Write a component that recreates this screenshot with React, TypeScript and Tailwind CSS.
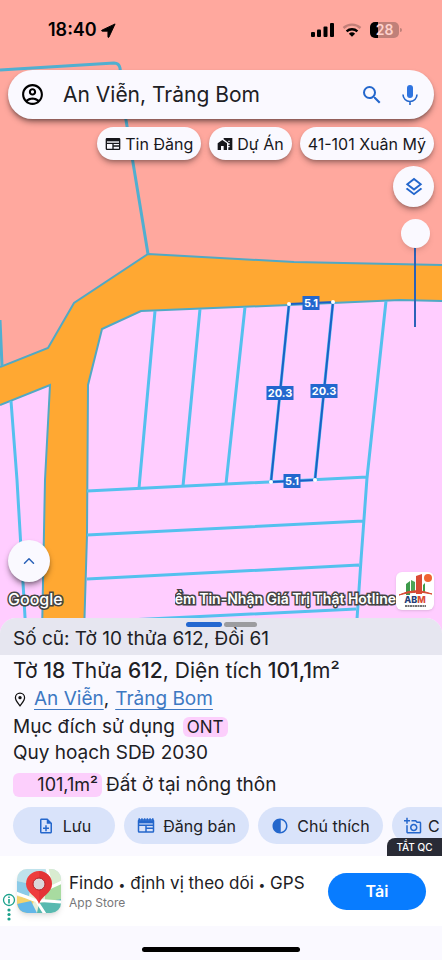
import type { ReactNode } from "react"
import { ChevronUp } from "lucide-react"
import {
    MdContrast,
    MdHomeWork,
    MdOutlineAccountCircle,
    MdOutlineAddAPhoto,
    MdOutlineLayers,
    MdOutlineNoteAdd,
    MdSearch,
} from "react-icons/md"

function NewsIcon({ className, toothed }: { className?: string; toothed?: boolean }) {
    return (
        <svg viewBox="0 0 24 24" fill="none" stroke="currentColor" strokeWidth="2" className={className} aria-hidden="true">
            <rect x="2" y="4" width="20" height="16" rx="1" />
            <path d={toothed ? "M2 6.5h20" : "M2 6h20"} strokeWidth="4" />
            {toothed && <path d="M2 3h20" strokeWidth="3" strokeDasharray="2 1.6" />}
            <path d="M2 11h20M12 15h10M12 11v9" />
        </svg>
    )
}

function PinIcon() {
    return (
        <svg viewBox="0 0 14 18" className="mr-2 ml-px h-[15px] w-3" aria-hidden="true">
            <path d="M7 16.500C4 12.500 1.500 10 1.500 6.800a5.500 5.500 0 0 1 11 0c0 3.200-2.500 5.700-5.500 9.700z" fill="none" stroke="#111" strokeWidth="1.500" />
            <circle cx="7" cy="6.800" r="2" fill="#111" />
        </svg>
    )
}

function MicIcon() {
    return (
        <svg viewBox="0 0 24 24" className="h-6 w-6" aria-hidden="true">
            <rect x="9" y="2" width="6" height="13" rx="3" fill="#2f74e0" />
            <path d="M5 11.5a7 7 0 0 0 14 0M12 18.5V22" fill="none" stroke="#2467cc" strokeWidth="1.6" />
        </svg>
    )
}

function StatusBar() {
    return (
        <div className="flex h-15 items-center justify-between pr-10 pl-12">
            <div className="flex items-center gap-1">
                <span className="text-lg font-semibold text-black">18:40</span>
                <svg viewBox="0 0 16 16" className="h-[15px] w-[15px]" aria-hidden="true">
                    <path d="M15 1 1 7.6c-.6.3-.4 1 .2 1.1H7.4v6.1c0 .7.8.8 1.1.2z" fill="#000" stroke="#000" strokeLinejoin="round" />
                </svg>
            </div>
            <div className="flex items-center gap-2">
                <svg viewBox="0 0 23 14" className="h-[14px] w-[23px]" aria-hidden="true">
                    <rect x="0" y="9" width="4" height="5" rx="1" />
                    <rect x="6" y="6.500" width="4" height="7.500" rx="1" />
                    <rect x="12.500" y="3.500" width="4" height="10.500" rx="1" />
                    <rect x="19" y="0" width="4" height="14" rx="1" />
                </svg>
                <svg viewBox="0 0 20 14" className="h-[14px] w-5" fill="none" aria-hidden="true">
                    <path d="M1.500 5a12.500 12.500 0 0 1 17 0" stroke="#c27f78" strokeWidth="2.400" />
                    <path d="M4.600 8.300a8 8 0 0 1 10.800 0" stroke="#000" strokeWidth="2.400" />
                    <path d="M10 13.800 6.900 10.700a4.500 4.500 0 0 1 6.200 0z" fill="#000" />
                </svg>
                <div className="flex items-center gap-px">
                    <div className="flex h-4 w-[29px] items-center justify-center rounded-[5px] bg-[linear-gradient(90deg,#000_28%,#c08079_28%)] text-sm leading-4 font-semibold text-[#ffd2cc]">
                        28
                    </div>
                    <div className="h-1 w-0.5 rounded-r bg-[#c08079]" />
                </div>
            </div>
        </div>
    )
}

const edgeLabels = [
    { text: "5.1", x: 311, y: 303, w: 17 },
    { text: "20.3", x: 280, y: 393, w: 27 },
    { text: "20.3", x: 324, y: 391, w: 27 },
    { text: "5.1", x: 292, y: 481, w: 17 },
]

const corners = [
    [289, 304],
    [333, 302],
    [315, 480],
    [271, 482],
]

function ParcelMap() {
    return (
        <svg
            viewBox="0 0 442 634"
            preserveAspectRatio="xMidYMax slice"
            className="absolute inset-0 h-full w-full bg-[#ffcdff]"
            role="img"
            aria-label="Bản đồ thửa đất"
        >
            <path d="M0 0H442V265L294 262 148 254 74 303 48 348 0 367Z" fill="#ffa89e" />
            <path
                d="M0 367 48 348 74 303 148 254 294 262 442 265V301L400 300 332 303 289 305 141 311 102 329 88 385 87 535 84 634H42L45 480 50 385 0 405Z"
                fill="#ffa832"
            />
            <g fill="none" stroke="#51a9c4" strokeWidth="2">
                <path d="M0 367 48 348 74 303 148 254 294 262 442 265" />
                <path d="M442 301 400 300 332 303 289 305 141 311 102 329 88 385 87 535 84 634" />
                <path d="M0 405 50 385 45 480 42 634" />
            </g>
            <path d="M0 70 114 63Q119 63 120 68L126 120 148 254M0 320 2 366" fill="none" stroke="#51afd0" strokeWidth="3" />
            <g fill="none" stroke="#55c0ee" strokeWidth="3">
                <path d="M155 311 139 488M200 309 183 486M245 307 226 484M289 305 271 481M333 302 315 479" />
                <path d="M386 301 367 478 361 560 356 634M87 491 367 477M87 535 363 521M87 579 359 565M87 622 356 609" />
                <path d="M11 401 17 480 26 634" />
            </g>
            <path d="M289 304 333 302 315 480 271 482Z" fill="none" stroke="#1b5fc6" strokeWidth="2" />
            {corners.map(([x, y]) => (
                <circle key={`${x}-${y}`} cx={x} cy={y} r="2" fill="#fff" />
            ))}
            {edgeLabels.map((l) => (
                <g key={`${l.x}-${l.y}`}>
                    <rect x={l.x - l.w / 2} y={l.y - 7} width={l.w} height="14" fill="#2367ce" />
                    <text x={l.x} y={l.y + 4} textAnchor="middle" fill="#fff" className="text-[11px] font-bold">
                        {l.text}
                    </text>
                </g>
            ))}
        </svg>
    )
}

function Chip({ icon, children }: { icon?: ReactNode; children: ReactNode }) {
    return (
        <button className="flex h-[33px] items-center gap-1 rounded-full bg-[#faf9ff] px-2 text-base whitespace-nowrap text-[#17171c] shadow-md shadow-black/30">
            {icon}
            {children}
        </button>
    )
}

function AbmLogo() {
    return (
        <svg viewBox="0 0 38 38" className="h-[38px] w-[38px] shrink-0 rounded-md bg-white shadow" role="img" aria-label="ABM">
            <path d="M10 12l4-3v14h-4z" fill="#3d9a4a" />
            <path d="M15 8l4 2v11h-4z" fill="#4ea456" />
            <path d="M20 4l6-2v20h-6z" fill="#d94a35" />
            <path d="M27 13l2-2v10h-2z" fill="#3d9a4a" />
            <circle cx="32" cy="6" r="4" fill="#f06432" />
            <path d="M3 23Q19 15 36 22 19 18 3 23" fill="#d94a35" stroke="#d94a35" />
            <text x="19" y="31" textAnchor="middle" fill="#263f78" className="text-[9px] font-extrabold">
                AB<tspan fill="#d94a35">M</tspan>
            </text>
            <path d="M9 34h21" stroke="#444" strokeWidth="1.500" strokeDasharray="2 .5" />
        </svg>
    )
}

function FindoIcon() {
    return (
        <svg viewBox="0 0 44 44" className="h-11 w-11 shrink-0 rounded-[10px] shadow-md" aria-hidden="true">
            <rect width="44" height="44" fill="#e8efd9" />
            <path d="M0 0h44v11L30 18 0 12z" fill="#bfe2ec" />
            <path d="M0 12 14 15 12 27 0 24z" fill="#8ccbe8" />
            <path d="M30 0h14v13l-12 5z" fill="#d9ecd0" />
            <path d="M28 20 44 13v17l-16 4z" fill="#a8dba0" />
            <path d="M0 27 18 31 10 44H0z" fill="#f5d36c" />
            <path d="M0 35 14 32 20 44H4z" fill="#62b7e8" />
            <path d="M22 34 44 30v14H20z" fill="#58b9b0" />
            <path d="M-1 24 17 31 45 33M19 31 28 45M30-1 34 17M45 13 28 21" fill="none" stroke="#fff" strokeWidth="3" />
            <path d="M22 35C20 27 9 24 9 15a13 13 0 0 1 26 0c0 9-11 12-13 20z" fill="#ee3d3d" />
            <path d="M22 35C24 27 35 24 35 15A13 13 0 0 0 22 2z" fill="#d92c32" opacity=".5" />
            <circle cx="22" cy="15" r="6" fill="#dcd8da" stroke="#b52429" />
        </svg>
    )
}

const actions = [
    { label: "Lưu", icon: <MdOutlineNoteAdd className="h-[18px] w-[18px]" />, box: "w-[102px] justify-center gap-2" },
    { label: "Đăng bán", icon: <NewsIcon toothed className="h-[18px] w-[18px]" />, box: "w-[125px] justify-center gap-2" },
    { label: "Chú thích", icon: <MdContrast className="h-[18px] w-[18px]" />, box: "w-[125px] justify-center gap-2" },
    { label: "C", icon: <MdOutlineAddAPhoto className="h-[18px] w-[18px]" />, box: "w-[65px] pl-3 gap-1.5" },
]

function MapControls() {
    return (
        <div className="flex flex-col items-end px-2">
            <form className="flex h-[49px] w-full items-center gap-3.5 rounded-full bg-[#faf9ff] px-3 shadow-md shadow-black/40">
                <button type="button" aria-label="Tài khoản">
                    <MdOutlineAccountCircle className="h-[25px] w-[25px] text-black" />
                </button>
                <input
                    aria-label="Tìm kiếm"
                    defaultValue="An Viễn, Trảng Bom"
                    className="min-w-0 flex-1 bg-transparent px-1 text-[21px] text-[#202024] outline-none"
                />
                <button type="button" aria-label="Tìm">
                    <MdSearch className="h-6 w-6 text-[#2467cc]" />
                </button>
                <button type="button" aria-label="Giọng nói">
                    <MicIcon />
                </button>
            </form>
            <div className="mt-2 flex gap-2">
                <Chip icon={<NewsIcon className="h-4 w-4" />}>Tin Đăng</Chip>
                <Chip icon={<MdHomeWork className="h-4 w-4" />}>Dự Án</Chip>
                <Chip>41-101 Xuân Mỹ</Chip>
            </div>
            <button
                aria-label="Lớp bản đồ"
                className="mt-1.5 flex h-[41px] w-[41px] items-center justify-center rounded-full bg-[#faf9ff] text-[#2467cc] shadow-md shadow-black/30"
            >
                <MdOutlineLayers className="h-[22px] w-[22px]" />
            </button>
            <input
                type="range"
                aria-label="Độ mờ"
                defaultValue={0}
                className="mt-3 mr-1 h-[108px] w-[30px] appearance-none bg-[linear-gradient(#2b62b8,#2b62b8)] bg-[length:2px_90%] bg-bottom bg-no-repeat [writing-mode:vertical-lr] [&::-webkit-slider-thumb]:h-[29px] [&::-webkit-slider-thumb]:w-[29px] [&::-webkit-slider-thumb]:appearance-none [&::-webkit-slider-thumb]:rounded-full [&::-webkit-slider-thumb]:bg-[#faf9ff] [&::-webkit-slider-thumb]:shadow-md"
            />
        </div>
    )
}

function MapFooter() {
    return (
        <div className="mt-auto px-2 pb-6">
            <button
                aria-label="Mở rộng"
                className="flex h-[42px] w-[42px] items-center justify-center rounded-full bg-[#faf9ff] text-[#2b62b8] shadow-md shadow-black/40"
            >
                <ChevronUp className="h-[18px] w-[18px]" />
            </button>
            <div className="-mt-2.5 flex items-center justify-between text-white">
                <span className="mt-4 text-base leading-5 font-medium [-webkit-text-stroke:3px_#444] [paint-order:stroke_fill]">Google</span>
                <div className="flex items-center">
                    <div className="mt-4 flex w-[221px] justify-end overflow-hidden text-sm leading-5 font-semibold whitespace-nowrap [-webkit-text-stroke:3px_#444] [paint-order:stroke_fill]">
                        ềm Tin-Nhận Giá Trị Thật Hotline
                    </div>
                    <AbmLogo />
                </div>
            </div>
        </div>
    )
}

function DetailSheet() {
    return (
        <section className="relative -mt-4 overflow-hidden rounded-t-2xl bg-[#faf9ff] text-[#202024]">
            <div className="bg-[#e6e6f0] px-[13px] pt-1">
                <div className="flex justify-center gap-0.5">
                    <div className="h-[5px] w-9 rounded-full bg-[#2467d0]" />
                    <div className="h-[5px] w-[33px] rounded-full bg-[#9c9c9f]" />
                </div>
                <p className="h-7 text-[19px] leading-6">Số cũ: Tờ 10 thửa 612, Đồi 61</p>
            </div>
            <div className="px-[13px]">
                <h1 className="text-[21px] leading-8">
                    Tờ <b className="font-medium">18</b> Thửa <b className="font-medium">612</b>, Diện tích <b className="font-medium">101,1</b>m²
                </h1>
                <p className="flex items-center text-[19px] leading-6">
                    <PinIcon />
                    <a href="#" className="text-[#3d78c2] underline underline-offset-4">An Viễn</a>
                    <span className="mr-1.5">,</span>
                    <a href="#" className="text-[#3d78c2] underline underline-offset-4">Trảng Bom</a>
                </p>
                <p className="flex items-center gap-2 pt-1 text-[19px] leading-6">
                    Mục đích sử dụng
                    <span className="rounded-md bg-[#fccffc] px-1 text-[17px] leading-5">ONT</span>
                </p>
                <p className="text-[19px] leading-7">Quy hoạch SDĐ 2030</p>
                <p className="flex items-center gap-1 pt-0.5 text-[19px] leading-8">
                    <span className="w-[89px] rounded-md bg-[#fccffc] pr-1 text-right text-lg leading-6">101,1m²</span>
                    Đất ở tại nông thôn
                </p>
            </div>
            <div className="flex gap-[9px] overflow-hidden pt-1.5 pb-3 pl-[13px]">
                {actions.map((a) => (
                    <button
                        key={a.label}
                        className={`flex h-[37px] shrink-0 items-center rounded-full bg-[#d9e3fa] text-base whitespace-nowrap ${a.box}`}
                    >
                        <span className="text-[#2467cc]">{a.icon}</span>
                        {a.label}
                    </button>
                ))}
            </div>
            <button className="absolute right-0 bottom-0 h-[18px] w-[55px] rounded-tl-lg bg-[#292b35] text-[10px] font-medium text-white">
                TẮT QC
            </button>
        </section>
    )
}

function AdBanner() {
    return (
        <aside className="flex h-[70px] items-center bg-white pr-4">
            <div className="mt-8 mr-px flex w-4 flex-col items-center self-center pl-0.5">
                <svg viewBox="0 0 14 28" className="h-7 w-[14px]" aria-hidden="true">
                    <circle cx="7" cy="7" r="5.500" fill="none" stroke="#1aa18b" strokeWidth="1.300" />
                    <path d="M7 6v4.500M7 3.500V5" stroke="#1aa18b" strokeWidth="1.600" />
                    <circle cx="7" cy="17" r="1.600" fill="#1aa18b" />
                    <circle cx="7" cy="21.500" r="1.600" fill="#1aa18b" />
                    <circle cx="7" cy="26" r="1.600" fill="#1aa18b" />
                </svg>
            </div>
            <FindoIcon />
            <div className="ml-2 flex-1">
                <p className="text-[17px] leading-6 whitespace-nowrap text-[#202024]">
                    Findo <span className="text-xs">•</span> định vị theo dõi <span className="text-xs">•</span> GPS
                </p>
                <p className="text-xs leading-4 text-[#77777a]">App Store</p>
            </div>
            <button className="h-[37px] w-[98px] rounded-full bg-[#087cff] text-base font-semibold text-white">Tải</button>
        </aside>
    )
}

export default function App() {
    return (
        <main className="flex min-h-screen flex-col overflow-hidden bg-[#faf9ff] font-['Inter','Roboto',sans-serif]">
            <section className="relative flex flex-1 flex-col">
                <ParcelMap />
                <div className="relative flex flex-1 flex-col">
                    <StatusBar />
                    <div className="pt-2.5">
                        <MapControls />
                    </div>
                    <MapFooter />
                </div>
            </section>
            <DetailSheet />
            <AdBanner />
            <footer className="flex h-[34px] justify-center pt-[21px]">
                <div className="h-[5px] w-[158px] rounded-full bg-black" />
            </footer>
        </main>
    )
}
